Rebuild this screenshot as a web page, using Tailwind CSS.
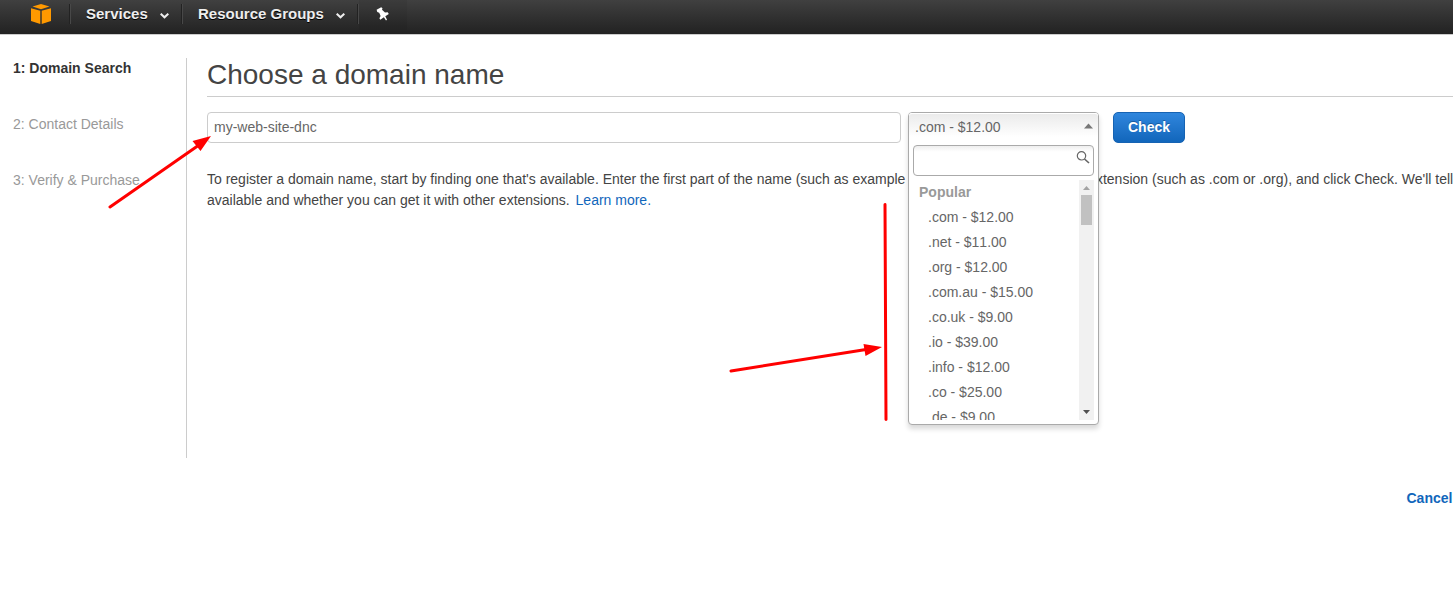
<!DOCTYPE html>
<html lang="en">
<head>
<meta charset="utf-8">
<title>Choose a domain name</title>
<script src="https://cdn.jsdelivr.net/npm/@tailwindcss/browser@4"></script>
</head>
<body class="relative h-[592px] w-[1453px] overflow-hidden bg-white font-['Liberation_Sans',Arial,sans-serif] text-[14px] leading-[21px] text-[#444]">
<header class="flex h-[35px] items-start border-b border-[#ccc] bg-linear-to-b from-[#404040] to-[#222] text-[15px] leading-7 font-bold text-[#eee] [text-shadow:0_1px_0_#000]">
  <svg class="mt-1 ml-[30px] h-5 w-[22px] shrink-0" viewBox="0 0 22 20" fill="#ff9900"><path d="M2.500 2.600 11 0l8.500 2.600L11 5.300zM1 4.200l9.300 2.600V20L1 17zM21 4.200l-9.300 2.600V20L21 17z"/></svg>
  <i class="mt-1 ml-[17px] h-5 w-[2px] border-l border-[#222] bg-[#484848]"></i>
  <div class="flex w-[110px] items-center pl-[15px]"><span class="w-[74px]">Services</span><svg class="mt-[3px] h-[6px] w-[9px]" viewBox="0 0 9 6" fill="none" stroke="#eee" stroke-width="2"><path d="m.7.7 3.800 3.600L8.300.7"/></svg></div>
  <i class="mt-1 h-5 w-[2px] border-l border-[#222] bg-[#484848]"></i>
  <div class="flex w-[174px] items-center pl-[15px]"><span class="w-[138px] whitespace-nowrap">Resource Groups</span><svg class="mt-[3px] h-[6px] w-[9px]" viewBox="0 0 9 6" fill="none" stroke="#eee" stroke-width="2"><path d="m.7.7 3.800 3.600L8.300.7"/></svg></div>
  <i class="mt-1 h-5 w-[2px] border-l border-[#222] bg-[#484848]"></i>
  <div class="h-[30px] w-12 bg-black/5 pt-[7px] pl-[17px]"><svg class="h-[14px] w-[13px]" viewBox="0 0 13 14" fill="#fff"><path d="M.6 2.800 5.200.2l1.300 1.100-.5 1.500 3 2.800 2.700-.3 1.100 1.600-3.500 2.300 1.700 3.600-1 .7-2.100-3.300-3.600 2.500-.9-1.500 1.200-2.200-1.400-3.300-1.900-.8z"/></svg></div>
</header>
<main class="flex pt-[23px]">
  <nav class="flex h-[400px] w-[187px] shrink-0 flex-col gap-[35px] border-r border-[#ccc] pl-[13px] text-[#999]">
    <b class="text-[#333]">1: Domain Search</b>
    <span>2: Contact Details</span>
    <span>3: Verify &amp; Purchase</span>
  </nav>
  <section class="ml-5 w-[1246px] shrink-0">
    <h1 class="h-[39px] border-b border-[#ccc] text-[28px] leading-[34px]">Choose a domain name</h1>
    <div class="mt-[15px] flex">
      <div class="h-[31px] w-[694px] rounded-[4px] border border-[#ccc] px-1.5 leading-[29px] text-[#666]">my-web-site-dnc</div>
      <div class="relative ml-[7px] h-[31px] w-[191px]">
        <div class="absolute inset-x-0 top-0 z-10 h-[313px] rounded-[4px] border border-[#aaa] bg-white text-[#666] shadow-[0_4px_5px_rgba(0,0,0,0.15)]">
          <div class="flex h-[30px] items-start justify-between rounded-t-[3px] bg-linear-to-b from-[#eaeaea] to-white to-80% pr-[5px] pl-1.5 leading-[28px] shadow-[inset_0_1px_0_#fff]"><span>.com - $12.00</span><svg class="mt-[10px] h-[6px] w-[9px]" viewBox="0 0 9 6" fill="#777"><path d="M0 5.500 4.500.5 9 5.500z"/></svg></div>
          <div class="mx-1 mt-[2px] flex h-[31px] justify-end rounded-[4px] border border-[#aaa] bg-linear-to-b from-[#eee] to-white to-20% pt-[5px] pr-[3px]"><svg class="h-[13px] w-[14px]" viewBox="0 0 14 13" fill="none" stroke="#666"><circle cx="5.500" cy="4.800" r="4.200" stroke-width="1.200"/><path d="m8.500 8 4.500 4" stroke-width="1.600"/></svg></div>
          <div class="mt-[4px] mr-1 flex h-[240px] overflow-hidden">
            <div class="flex-1 overflow-hidden leading-[25px]">
              <b class="block pl-[10px] text-[#999]">Popular</b>
              <ul class="pl-[19px] [font-kerning:none]"><li>.com - $12.00</li><li>.net - $11.00</li><li>.org - $12.00</li><li>.com.au - $15.00</li><li>.co.uk - $9.00</li><li>.io - $39.00</li><li>.info - $12.00</li><li>.co - $25.00</li><li>.de - $9.00</li></ul>
            </div>
            <div class="flex w-[15px] flex-col items-center bg-[#f1f1f1]"><svg class="mt-[6px] h-1 w-[7px]" viewBox="0 0 7 4" fill="#a3a3a3"><path d="M0 4 3.500 0 7 4z"/></svg><i class="mt-[5px] h-[30px] w-[11px] bg-[#c1c1c1]"></i><svg class="mt-auto mb-[6px] h-1 w-[7px]" viewBox="0 0 7 4" fill="#505050"><path d="M0 0h7L3.500 4z"/></svg></div>
          </div>
        </div>
      </div>
      <div class="ml-[14px] h-[31px] w-[72px] rounded-[5px] border border-[#1663b3] bg-linear-to-b from-[#2f86dd] to-[#1166bb] text-center leading-[28px] font-bold text-white [text-shadow:0_-1px_0_#1a5ba0]">Check</div>
    </div>
    <p class="mt-[26px] whitespace-nowrap">To register a domain name, start by finding one that's available. Enter the first part of the name (such as example <span class="inline-block w-[175px]"></span> extension (such as .com or .org), and click Check. We'll tell<br>available and whether you can get it with other extensions. <a class="ml-[2px] text-[#1166bb]">Learn more.</a></p>
  </section>
</main>
<footer class="mt-[30px] pl-[1406.500px] font-bold whitespace-nowrap text-[#1166bb]">Cancel</footer>
<svg class="pointer-events-none absolute inset-0 z-20" width="1453" height="592" fill="#f00" stroke="#f00" stroke-linecap="round"><path d="M110 207 199 145M731 371 866 349.500M885 204.500 886 419.500" stroke-width="3"/><path stroke="none" d="M211 136 200.500 151 192.500 141zM882 347 865.500 356 863.500 344z"/></svg>
</body>
</html>
